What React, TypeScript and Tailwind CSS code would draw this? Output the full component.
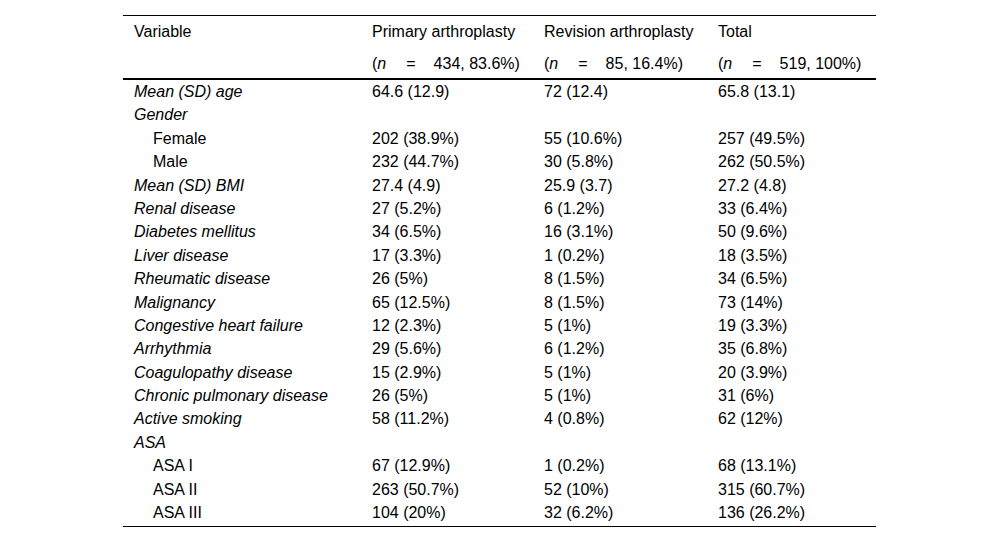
import React from 'react';

type Row = {
  label: string;
  italic?: boolean;
  sub?: boolean;
  values: string[];
};

const rows: Row[] = [
  { label: 'Mean (SD) age', italic: true, values: ['64.6 (12.9)', '72 (12.4)', '65.8 (13.1)'] },
  { label: 'Gender', italic: true, values: ['', '', ''] },
  { label: 'Female', sub: true, values: ['202 (38.9%)', '55 (10.6%)', '257 (49.5%)'] },
  { label: 'Male', sub: true, values: ['232 (44.7%)', '30 (5.8%)', '262 (50.5%)'] },
  { label: 'Mean (SD) BMI', italic: true, values: ['27.4 (4.9)', '25.9 (3.7)', '27.2 (4.8)'] },
  { label: 'Renal disease', italic: true, values: ['27 (5.2%)', '6 (1.2%)', '33 (6.4%)'] },
  { label: 'Diabetes mellitus', italic: true, values: ['34 (6.5%)', '16 (3.1%)', '50 (9.6%)'] },
  { label: 'Liver disease', italic: true, values: ['17 (3.3%)', '1 (0.2%)', '18 (3.5%)'] },
  { label: 'Rheumatic disease', italic: true, values: ['26 (5%)', '8 (1.5%)', '34 (6.5%)'] },
  { label: 'Malignancy', italic: true, values: ['65 (12.5%)', '8 (1.5%)', '73 (14%)'] },
  { label: 'Congestive heart failure', italic: true, values: ['12 (2.3%)', '5 (1%)', '19 (3.3%)'] },
  { label: 'Arrhythmia', italic: true, values: ['29 (5.6%)', '6 (1.2%)', '35 (6.8%)'] },
  { label: 'Coagulopathy disease', italic: true, values: ['15 (2.9%)', '5 (1%)', '20 (3.9%)'] },
  { label: 'Chronic pulmonary disease', italic: true, values: ['26 (5%)', '5 (1%)', '31 (6%)'] },
  { label: 'Active smoking', italic: true, values: ['58 (11.2%)', '4 (0.8%)', '62 (12%)'] },
  { label: 'ASA', italic: true, values: ['', '', ''] },
  { label: 'ASA I', sub: true, values: ['67 (12.9%)', '1 (0.2%)', '68 (13.1%)'] },
  { label: 'ASA II', sub: true, values: ['263 (50.7%)', '52 (10%)', '315 (60.7%)'] },
  { label: 'ASA III', sub: true, values: ['104 (20%)', '32 (6.2%)', '136 (26.2%)'] },
];

const cols = 'grid grid-cols-[238px_172px_174px_1fr]';

function NCell({ n, pct }: { n: string; pct: string }) {
  return (
    <div className="pl-[11px] whitespace-nowrap">
      (<i>n</i>
      <span className="inline-block w-[20px]" />=
      <span className="inline-block w-[18px]" />
      {n}, {pct})
    </div>
  );
}

export default function App() {
  return (
    <div
      className="w-[1000px] h-[544px] bg-white text-black pt-[15px]"
      style={{ fontFamily: '"Liberation Sans", Arial, sans-serif' }}
    >
      <div className="ml-[123px] w-[753px] text-[16px] leading-[23.4px]">
        {/* Header */}
        <div className="border-t border-black">
          <div className={`${cols} h-[31px] pt-[4px]`}>
            <div className="pl-[11px]">Variable</div>
            <div className="pl-[11px]">Primary arthroplasty</div>
            <div className="pl-[11px]">Revision arthroplasty</div>
            <div className="pl-[11px]">Total</div>
          </div>
          <div className={`${cols} h-[31px] pt-[5px]`}>
            <div />
            <NCell n="434" pct="83.6%" />
            <NCell n="85" pct="16.4%" />
            <NCell n="519" pct="100%" />
          </div>
        </div>

        {/* Body */}
        <div className="border-t-2 border-b border-black pb-[2px]">
          {rows.map((r) => (
            <div key={r.label} className={`${cols} h-[23.4px]`}>
              <div className={`${r.sub ? 'pl-[30px]' : 'pl-[11px]'} ${r.italic ? 'italic' : ''} whitespace-nowrap`}>
                {r.label}
              </div>
              {r.values.map((v, i) => (
                <div key={i} className="pl-[11px] whitespace-nowrap">
                  {v}
                </div>
              ))}
            </div>
          ))}
        </div>
      </div>
    </div>
  );
}
